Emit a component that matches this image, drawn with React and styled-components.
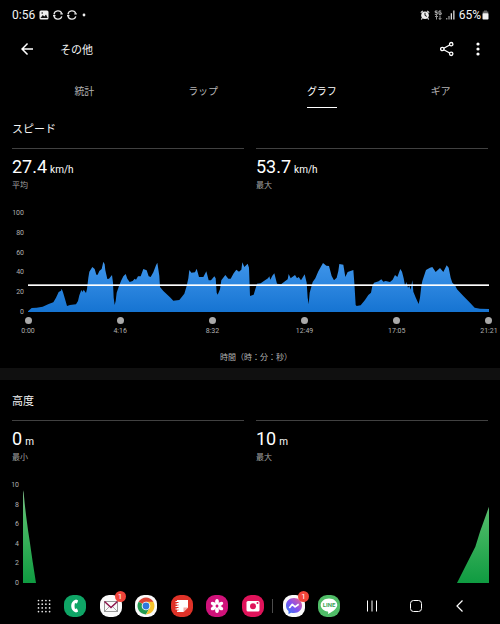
import React from "react";
import styled, { createGlobalStyle } from "styled-components";

const GlobalStyle = createGlobalStyle`
  * { box-sizing: border-box; }
  body { margin: 0; background: #000; }
  button { border: 0; padding: 0; margin: 0; background: none; color: inherit; font: inherit; cursor: pointer; }
  svg { display: block; }
  h1, h2, p, dl, dd, dt { margin: 0; font-weight: 400; }
`;

const japanese = `"Noto Sans CJK JP", sans-serif`;

const Screen = styled.div`
  min-height: 100vh;
  display: flex;
  flex-direction: column;
  background: #000;
  color: #f4f4f4;
  font-family: Roboto, "Noto Sans CJK JP", sans-serif;
`;

const StatusBar = styled.div`
  display: flex;
  justify-content: space-between;
  align-items: center;
  height: 30px;
  padding: 0 11px 0 12px;
  font-size: 12px;
  line-height: 16px;
`;

const StatusGroup = styled.div`
  display: flex;
  align-items: center;
  gap: ${(p) => p.$gap}px;
`;

const AppBar = styled.header`
  display: flex;
  align-items: center;
  height: 38px;
  padding: 0 13px 0 18px;
`;

const Title = styled.h1`
  flex: 1;
  margin-left: 24px;
  font-family: ${japanese};
  font-size: 11px;
  line-height: 16px;
`;

const BarActions = styled.div`
  display: flex;
  gap: 13px;
`;

const IconButton = styled.button`
  display: grid;
  place-items: center;
  width: 18px;
  height: 18px;
`;

const Tabs = styled.nav`
  display: grid;
  grid-template-columns: repeat(4, 1fr);
  height: 40px;
  padding-left: 25px;
`;

const Tab = styled.button`
  display: flex;
  justify-content: center;
  padding-top: 15px;
  font-family: ${japanese};
  font-size: 10px;
  line-height: 16px;
  color: ${(p) => (p.$active ? "#ffffff" : "#b4b4b4")};
`;

const TabLabel = styled.span`
  height: 25px;
  border-bottom: 1px solid ${(p) => (p.$active ? "#ffffff" : "transparent")};
`;

const Section = styled.section`
  padding: 12px 0 ${(p) => (p.$last ? 0 : 4)}px;
`;

const Heading = styled.h2`
  padding: 0 12px;
  font-family: ${japanese};
  font-size: 11px;
  line-height: 16px;
`;

const Stats = styled.dl`
  display: grid;
  grid-template-columns: 1fr 1fr;
  gap: 12px;
  padding: 12px 12px 0;
`;

const Stat = styled.div`
  display: flex;
  flex-direction: column-reverse;
  border-top: 1px solid #414141;
  padding-top: 6px;
`;

const StatValue = styled.dd`
  font-size: 18px;
  line-height: 24px;
  color: #fff;
`;

const Unit = styled.span`
  margin-left: 3px;
  font-size: 10px;
  line-height: 12px;
`;

const StatName = styled.dt`
  font-size: 8px;
  line-height: 13px;
  color: #a2a2a2;
`;

const ChartFrame = styled.div`
  display: grid;
  grid-template-columns: ${(p) => p.$axis}px 1fr;
  margin-top: 16px;
  padding-right: 11px;
`;

const YAxis = styled.div`
  display: flex;
  flex-direction: column;
  justify-content: space-between;
  padding-right: 4px;
  text-align: right;
  font-size: 7px;
  line-height: 10px;
  color: #b0b0b0;
`;

const Plot = styled.div`
  padding: 5px 0;
`;

const PlotDrawing = styled.svg`
  width: 100%;
  height: ${(p) => p.$height}px;
`;

const XAxis = styled.div`
  display: flex;
  justify-content: space-between;
  margin: 0 11px 0 28px;
`;

const Tick = styled.div`
  width: 0;
  display: flex;
  flex-direction: column;
  align-items: center;
  gap: 2px;
  font-size: 7px;
  line-height: 10px;
  color: #b0b0b0;
  white-space: nowrap;
`;

const Dot = styled.span`
  width: 7px;
  height: 7px;
  border-radius: 50%;
  background: #aaa;
`;

const AxisTitle = styled.p`
  margin-top: 16px;
  padding-left: 12px;
  text-align: center;
  font-size: 8px;
  line-height: 12px;
  color: #b4b4b4;
`;

const Separator = styled.div`
  height: 12px;
  background: #101010;
`;

const Dock = styled.footer`
  display: flex;
  align-items: center;
  height: 36px;
  margin-top: auto;
  padding: 0 33px 0 37px;
`;

const AppGroup = styled.div`
  display: flex;
  justify-content: space-between;
  flex: ${(p) => p.$share} 1 0;
  margin-left: ${(p) => p.$before}px;
`;

const AppIcon = styled.button`
  position: relative;
  display: grid;
  place-items: center;
  width: 22px;
  height: 22px;
  border-radius: 9px;
  background: ${(p) => p.$color};
`;

const Badge = styled.span`
  position: absolute;
  top: -4px;
  right: -4px;
  width: 11px;
  height: 11px;
  border-radius: 50%;
  background: #f0443a;
  color: #fff;
  font-size: 8px;
  line-height: 11px;
  text-align: center;
`;

const DockDivider = styled.span`
  width: 1px;
  height: 14px;
  margin-left: 8px;
  background: #4c4c4c;
`;

const SystemButton = styled.button`
  display: grid;
  place-items: center;
  width: 14px;
  height: 22px;
`;

const speedArea =
  "84,333 84,331 95,321 110,320 128,317 146,309 160,304 168,290 176,273 183,269 185,263 189,274 195,294 201,315 210,312 228,310 234,300 238,283 244,267 248,273 251,266 258,276 261,264 265,230 268,212 277,198 284,204 289,221 293,221 298,210 305,204 310,182 314,190 316,208 322,234 327,233 333,226 336,222 339,245 341,290 344,312 347,300 350,275 357,255 364,238 370,226 377,219 382,233 389,243 398,240 404,233 408,236 414,226 422,226 430,204 440,208 446,226 452,228 460,214 468,193 472,185 475,205 478,225 480,258 490,270 510,289 520,299 538,297 553,278 560,255 565,232 568,207 574,215 585,214 590,203 597,228 610,228 619,211 626,238 633,238 643,226 647,232 650,275 653,281 660,265 664,238 676,222 685,233 692,233 701,217 709,206 717,212 724,206 727,184 733,198 743,188 747,200 750,285 761,281 771,248 782,247 795,238 804,232 808,226 811,236 817,224 823,217 831,248 843,250 855,241 863,235 866,219 872,232 885,222 891,232 896,228 903,238 914,220 920,245 923,290 926,310 929,275 938,243 946,232 955,211 969,186 979,194 987,195 995,225 1002,238 1010,230 1015,210 1018,189 1030,191 1036,228 1043,213 1060,207 1063,245 1067,312 1070,315 1082,313 1095,297 1105,282 1113,275 1117,255 1122,245 1136,241 1144,235 1150,242 1157,240 1170,243 1178,236 1185,222 1192,228 1201,204 1206,212 1211,232 1215,254 1219,243 1224,260 1228,254 1232,266 1237,238 1240,272 1248,292 1256,309 1260,290 1264,255 1267,240 1278,207 1290,200 1297,198 1307,213 1320,201 1330,213 1340,193 1346,200 1352,230 1357,245 1365,253 1371,265 1390,285 1410,305 1424,320 1440,323 1467,324 1467,333";

function StatPair({ items }) {
  return (
    <Stats>
      {items.map(([value, unit, name]) => (
        <Stat key={name}>
          <StatName>{name}</StatName>
          <StatValue>
            {value}
            <Unit>{unit}</Unit>
          </StatValue>
        </Stat>
      ))}
    </Stats>
  );
}

function YLabels({ values }) {
  return (
    <YAxis>
      {values.map((v) => (
        <span key={v}>{v}</span>
      ))}
    </YAxis>
  );
}

function SyncIcon() {
  return (
    <svg width="10" height="10" viewBox="0 0 10 10" fill="none" stroke="#e8e8e8" strokeWidth="1.3">
      <path d="M1 4.400A4 3.800 0 0 1 8.800 3.600M8.800 6.400A4 3.800 0 0 1 1 5.800" />
      <path d="M7.300 3.900h2.500M0 5.600h2.500" />
    </svg>
  );
}

export default function App() {
  return (
    <Screen>
      <GlobalStyle />
      <StatusBar>
        <StatusGroup $gap={4}>
          <span>0:56</span>
          <svg width="10" height="10" viewBox="0 0 10 10">
            <rect x=".5" y=".5" width="9" height="9" rx="1.5" fill="#f0f0f0" />
            <path d="M1.5 8 3.8 5 5.3 6.6 7 4.4 8.7 8z" fill="#111" />
            <circle cx="3.2" cy="3" r=".8" fill="#111" />
          </svg>
          <SyncIcon />
          <SyncIcon />
          <svg width="8" height="10" viewBox="0 0 8 10">
            <circle cx="3" cy="5" r="1.4" fill="#eee" />
          </svg>
        </StatusGroup>
        <StatusGroup $gap={4}>
          <svg width="10" height="10" viewBox="0 0 10 10">
            <circle cx="5" cy="5.2" r="3.8" fill="#eee" />
            <path d="M.8 2.6 2.8.9M9.2 2.6 7.2.9M2.3 8.2 1.3 9.5M7.7 8.2l1 1.3" stroke="#eee" strokeWidth="1.2" />
            <path d="M5 2.8v2.6l1.8 1" fill="none" stroke="#111" />
          </svg>
          <svg width="8" height="10" viewBox="0 0 8 10" fill="none" stroke="#bbb">
            <path d="M3.5 1H1.2v1.4h2v1.9H.8M7.2 1H5v3.3h2.2V2.8H6" />
            <path d="M2.5 9.5v-4M1 7l1.5-1.5L4 7M6 5.5v4M4.8 8 6 9.5 7.4 8" strokeWidth=".8" />
          </svg>
          <svg width="9" height="10" viewBox="0 0 9 10">
            <path d="M0 8h1.4v1.5H0zM2.3 6h1.4v3.5H2.3z" fill="#888" />
            <path d="M4.7 3.3H6v6.2H4.7zM7.2.5h1.3v9H7.2z" fill="#ddd" />
          </svg>
          <StatusGroup $gap={1}>
            <span>65%</span>
            <svg width="7" height="10" viewBox="0 0 7 10">
              <path d="M2 .5h3v1h1.3v2.2H.7V1.5H2z" fill="#666" />
              <rect x=".5" y="3.3" width="6" height="6.2" rx=".8" fill="#f2f2f2" />
            </svg>
          </StatusGroup>
        </StatusGroup>
      </StatusBar>

      <AppBar>
        <IconButton aria-label="戻る">
          <svg width="18" height="18" viewBox="0 0 24 24" fill="#fff">
            <path d="M20 11H7.83l5.59-5.59L12 4l-8 8 8 8 1.41-1.41L7.83 13H20z" />
          </svg>
        </IconButton>
        <Title>その他</Title>
        <BarActions>
          <IconButton aria-label="共有">
            <svg width="18" height="18" viewBox="0 0 18 18" fill="none" stroke="#fff" strokeWidth="1.3">
              <circle cx="4.3" cy="9" r="1.7" />
              <circle cx="13.2" cy="4.2" r="1.7" />
              <circle cx="13.2" cy="13.8" r="1.7" />
              <path d="m5.8 8.2 5.9-3.2M5.8 9.8l5.9 3.2" />
            </svg>
          </IconButton>
          <IconButton aria-label="メニュー">
            <svg width="18" height="18" viewBox="0 0 18 18" fill="#fff">
              <circle cx="9" cy="4" r="1.6" />
              <circle cx="9" cy="9" r="1.6" />
              <circle cx="9" cy="14" r="1.6" />
            </svg>
          </IconButton>
        </BarActions>
      </AppBar>

      <Tabs>
        {["統計", "ラップ", "グラフ", "ギア"].map((name) => (
          <Tab key={name} $active={name === "グラフ"}>
            <TabLabel $active={name === "グラフ"}>{name}</TabLabel>
          </Tab>
        ))}
      </Tabs>

      <Section>
        <Heading>スピード</Heading>
        <StatPair items={[["27.4", "km/h", "平均"], ["53.7", "km/h", "最大"]]} />
        <ChartFrame $axis={28}>
          <YLabels values={[100, 80, 60, 40, 20, 0]} />
          <Plot>
            <PlotDrawing $height={99} viewBox="84 36 1383 297" preserveAspectRatio="none" role="img" aria-label="スピード">
              <defs>
                <linearGradient id="speed" x1="0" y1="0" x2="0" y2="1">
                  <stop offset="0" stopColor="#3f95ea" />
                  <stop offset="1" stopColor="#1674d2" />
                </linearGradient>
              </defs>
              <polygon points={speedArea} fill="url(#speed)" />
              <rect x="84" y="250" width="1383" height="5" fill="#fff" />
            </PlotDrawing>
          </Plot>
        </ChartFrame>
        <XAxis>
          {["0:00", "4:16", "8:32", "12:49", "17:05", "21:21"].map((t) => (
            <Tick key={t}>
              <Dot />
              <span>{t}</span>
            </Tick>
          ))}
        </XAxis>
        <AxisTitle>時間（時：分：秒）</AxisTitle>
      </Section>

      <Separator />

      <Section $last>
        <Heading>高度</Heading>
        <StatPair items={[["0", "m", "最小"], ["10", "m", "最大"]]} />
        <ChartFrame $axis={23}>
          <YLabels values={[10, 8, 6, 4, 2, 0]} />
          <Plot>
            <PlotDrawing $height={98} viewBox="69 315 1398 294" preserveAspectRatio="none" role="img" aria-label="高度">
              <defs>
                <linearGradient id="height" gradientUnits="userSpaceOnUse" x1="0" y1="330" x2="0" y2="609">
                  <stop offset="0" stopColor="#7fbd8a" />
                  <stop offset="0.3" stopColor="#4cba66" />
                  <stop offset="1" stopColor="#0f9b41" />
                </linearGradient>
              </defs>
              <polygon points="69,609 69,331 71,338 74,370 78,405 84,450 90,490 98,545 108,609" fill="url(#height)" />
              <polygon points="1371,609 1426,500 1440,455 1467,380 1467,609" fill="url(#height)" />
            </PlotDrawing>
          </Plot>
        </ChartFrame>
      </Section>

      <Dock>
        <SystemButton aria-label="アプリ一覧">
          <svg width="14" height="14" viewBox="0 0 14 14" fill="#e8e8e8">
            {[1.5, 5.2, 8.9, 12.6].map((x) =>
              [1.5, 5.2, 8.9, 12.6].map((y) => <circle key={`${x}-${y}`} cx={x} cy={y} r=".85" />)
            )}
          </svg>
        </SystemButton>
        <AppGroup $share={200} $before={13}>
          <AppIcon $color="#0fa566" aria-label="電話">
            <svg width="22" height="22" viewBox="0 0 22 22">
              <path d="M13.8 5.2 12 4.5C8.800 5.200 7.200 8 7.200 11s1.600 5.800 4.800 6.500l1.800-.7c.3-.2.3-.5.200-.8l-.8-2c-.2-.4-.5-.5-.9-.4l-1.300.3c-.6-1.900-.6-3.900 0-5.800l1.300.3c.4.1.7 0 .9-.4l.8-2c.1-.3.1-.6-.2-.8z" fill="#fff" />
            </svg>
          </AppIcon>
          <AppIcon $color="#fafafa" aria-label="メール">
            <svg width="22" height="22" viewBox="0 0 22 22" fill="none">
              <rect x="4.500" y="6.500" width="13" height="10" stroke="#999" />
              <path d="m5 16 4.500-4.500M17 16l-4.500-4.500" stroke="#aaa" />
              <path d="m4.500 6.500 6.500 6 6.500-6" stroke="#8c174d" strokeWidth="1.500" />
            </svg>
            <Badge>1</Badge>
          </AppIcon>
          <AppIcon $color="#fafafa" aria-label="Chrome">
            <svg width="22" height="22" viewBox="0 0 22 22">
              <path d="M11 11 3.640 6.750A8.500 8.500 0 0 1 18.360 6.750z" fill="#dc4436" />
              <path d="M3.640 6.750A8.500 8.500 0 0 0 11 19.500L14.680 13.120 11 11z" fill="#249b50" />
              <path d="M18.360 6.750A8.500 8.500 0 0 1 11 19.500L14.680 13.120 11 6.750z" fill="#f6c32c" />
              <circle cx="11" cy="11" r="4.300" fill="#fff" />
              <circle cx="11" cy="11" r="3.400" fill="#2f78dd" />
            </svg>
          </AppIcon>
          <AppIcon $color="#df3228" aria-label="ノート">
            <svg width="22" height="22" viewBox="0 0 22 22">
              <path d="M6 5h11v7.500L12.500 17H6z" fill="#fff" />
              <path d="M12.500 17v-4.500H17z" fill="#f3aaa4" />
              <path d="M4.500 7.500h3M4.500 10h3M4.500 12.500h3M4.500 15h3" stroke="#df3228" />
              <path d="M4.500 6.500h2.500M4.500 9h2.500M4.500 11.500h2.500M4.500 14h2.500" stroke="#fff" />
            </svg>
          </AppIcon>
          <AppIcon $color="#d0127a" aria-label="ギャラリー">
            <svg width="22" height="22" viewBox="0 0 22 22" fill="#fff">
              {[0, 60, 120, 180, 240, 300].map((a) => (
                <ellipse key={a} cx="11" cy="6.900" rx="1.900" ry="2.900" transform={`rotate(${a} 11 11)`} />
              ))}
              <circle cx="11" cy="11" r="1.300" fill="#d0127a" />
            </svg>
          </AppIcon>
          <AppIcon $color="#e0135a" aria-label="カメラ">
            <svg width="22" height="22" viewBox="0 0 22 22">
              <rect x="4.500" y="6" width="13" height="10.500" rx="1.500" fill="#fff" />
              <circle cx="11" cy="11.200" r="3" fill="#e0135a" />
              <circle cx="15.500" cy="8" r="1" fill="#e0135a" />
            </svg>
          </AppIcon>
        </AppGroup>
        <DockDivider />
        <AppGroup $share={57} $before={10}>
          <AppIcon $color="#fafafa" aria-label="Messenger">
            <svg width="22" height="22" viewBox="0 0 22 22">
              <defs>
                <linearGradient id="chat" x1="0" y1="1" x2="1" y2="0">
                  <stop offset="0" stopColor="#287cf5" />
                  <stop offset=".5" stopColor="#8450ef" />
                  <stop offset="1" stopColor="#f35d87" />
                </linearGradient>
              </defs>
              <path d="M11 3c-4.700 0-8 3.300-8 7.600 0 2.300 1 4.200 2.500 5.500V19l2.600-1.300c.9.300 1.900.4 2.900.4 4.700 0 8-3.300 8-7.500S15.700 3 11 3z" fill="url(#chat)" />
              <path d="m6.300 13 3-3.700 2.800 2.600 3.600-2.700" fill="none" stroke="#fff" strokeWidth="1.700" strokeLinejoin="round" />
            </svg>
            <Badge>1</Badge>
          </AppIcon>
          <AppIcon $color="#50bd67" aria-label="LINE">
            <svg width="22" height="22" viewBox="0 0 22 22">
              <path d="M11 3.500c-4.600 0-8.300 2.900-8.300 6.600 0 3.300 2.900 5.900 6.900 6.500.8.200.7.800.4 2.400 2.200-.9 9.300-4.800 9.300-8.900 0-3.700-3.700-6.600-8.300-6.600z" fill="#fff" />
              <text x="11" y="12.300" textAnchor="middle" fontFamily="Roboto" fontSize="6" fontWeight="700" fill="#40a558">LINE</text>
            </svg>
          </AppIcon>
        </AppGroup>
        <AppGroup $share={102} $before={25}>
          <SystemButton aria-label="履歴">
            <svg width="14" height="14" viewBox="0 0 14 14" stroke="#fff">
              <path d="M2.500 1.500v11M7 1.500v11M11.500 1.500v11" />
            </svg>
          </SystemButton>
          <SystemButton aria-label="ホーム">
            <svg width="14" height="14" viewBox="0 0 14 14" fill="none" stroke="#fff">
              <rect x="1.500" y="1.500" width="11" height="11" rx="3" />
            </svg>
          </SystemButton>
          <SystemButton aria-label="戻る">
            <svg width="14" height="14" viewBox="0 0 14 14" fill="none" stroke="#fff" strokeWidth="1.200">
              <path d="M9.500 1.500 4 7l5.500 5.500" />
            </svg>
          </SystemButton>
        </AppGroup>
      </Dock>
    </Screen>
  );
}
